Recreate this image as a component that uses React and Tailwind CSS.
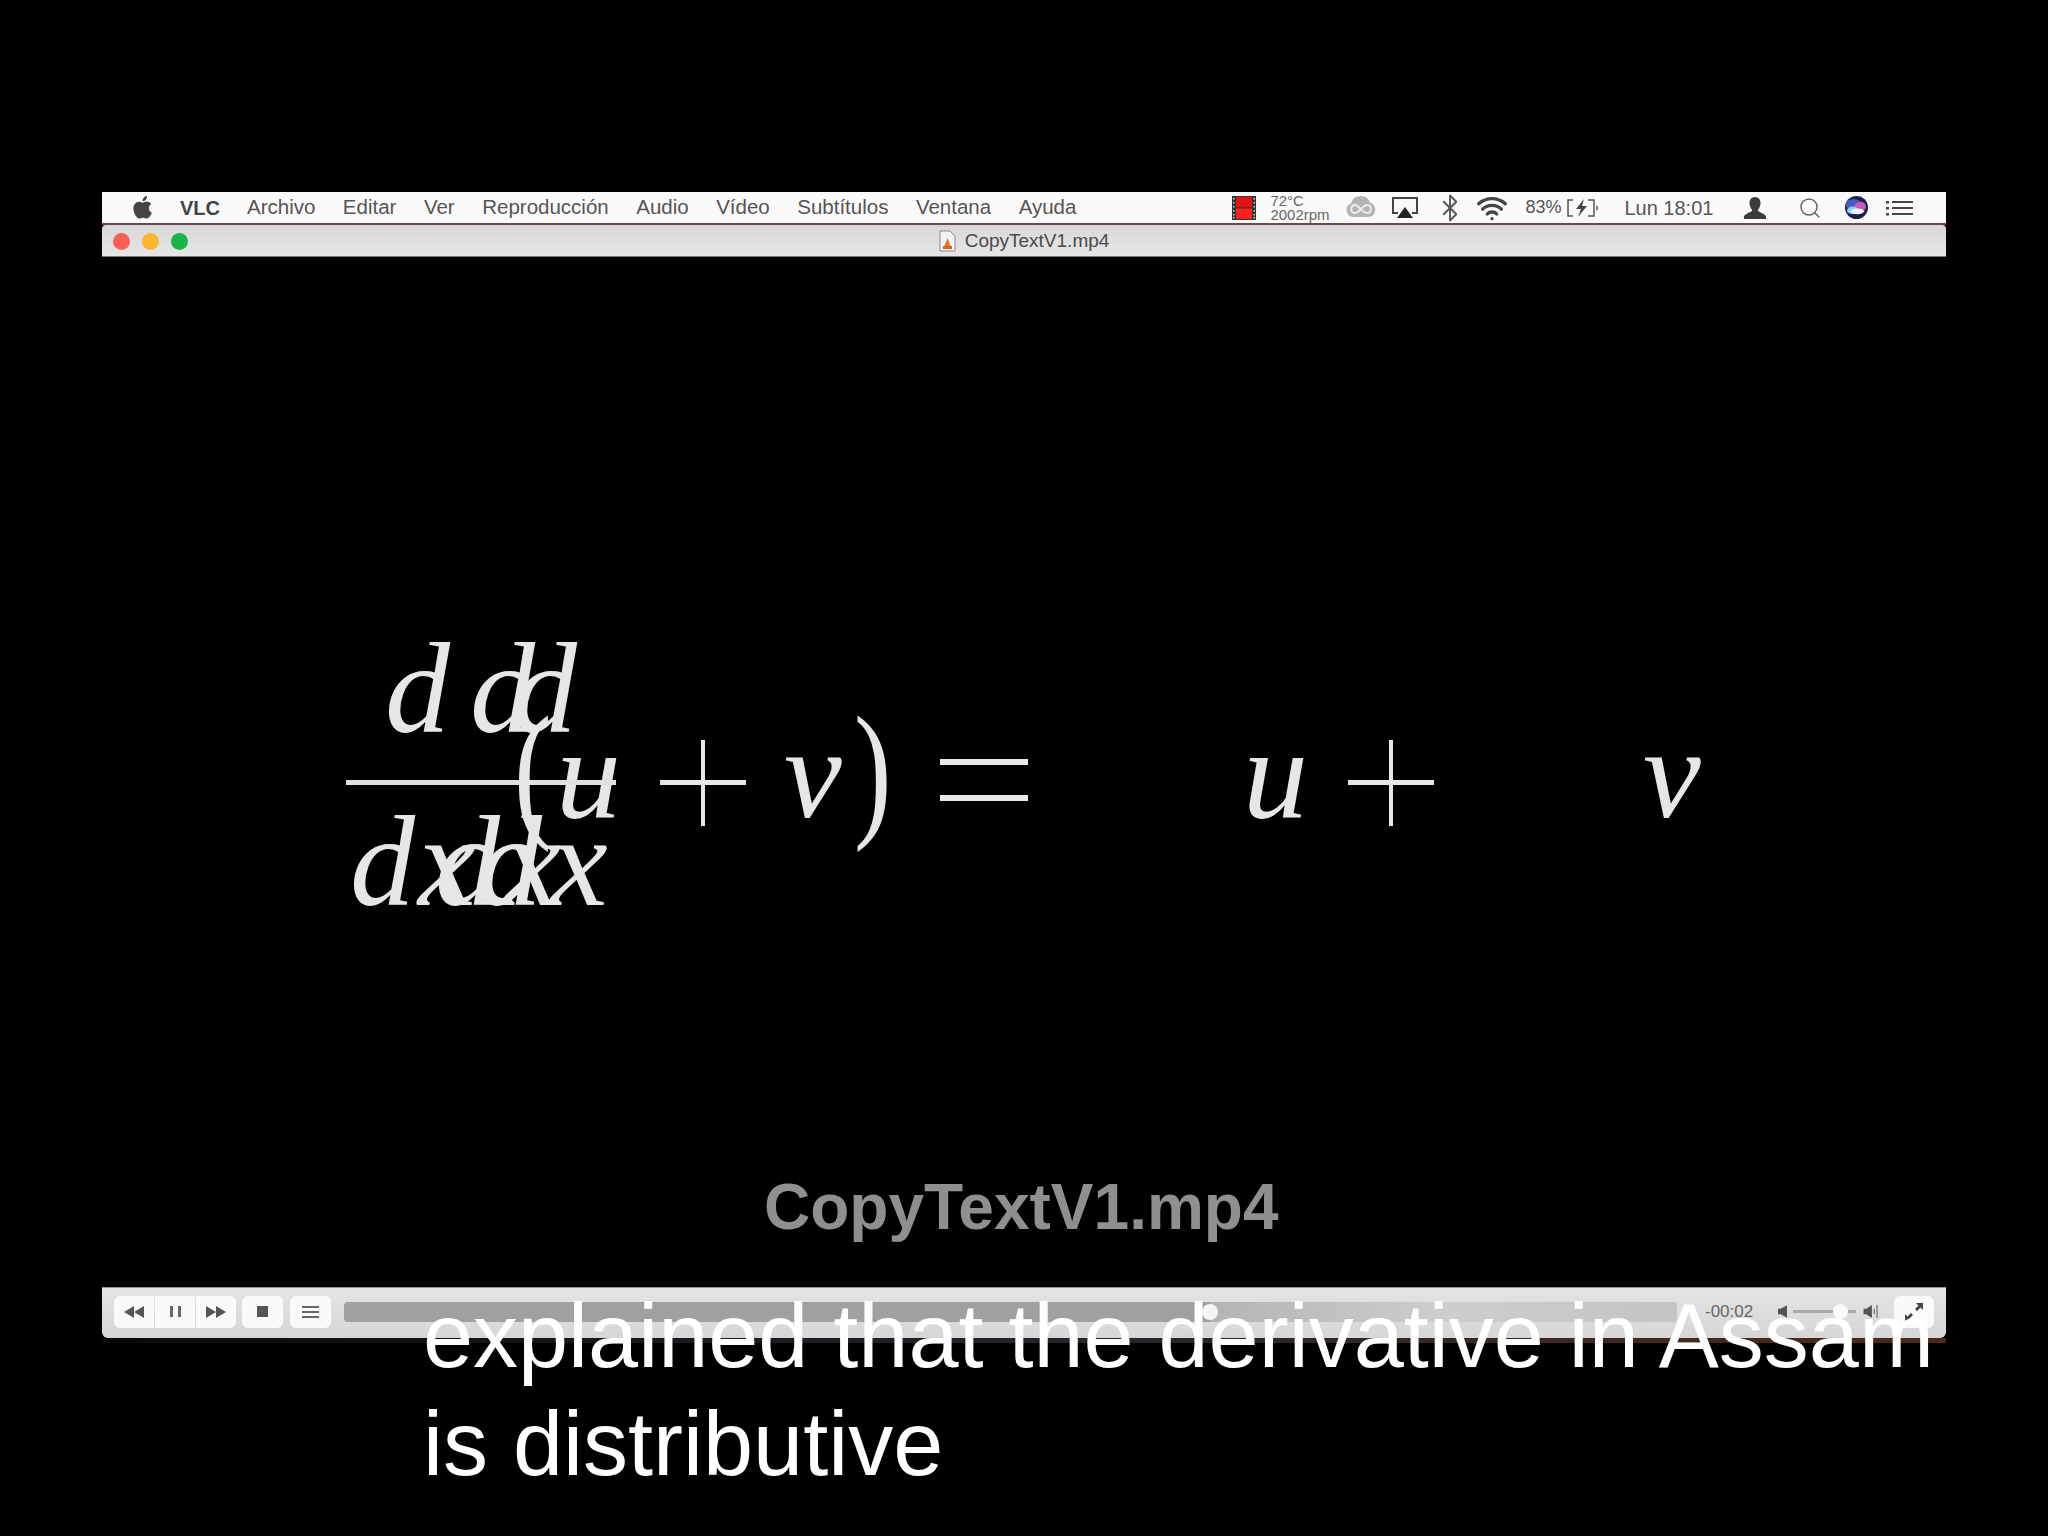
import React from 'react'
import { Search, Bluetooth, Wifi } from 'lucide-react'

const menus = ['Archivo', 'Editar', 'Ver', 'Reproducción', 'Audio', 'Vídeo', 'Subtítulos', 'Ventana', 'Ayuda']

// every glyph of the equation sits on a free canvas, overlaps are part of the picture
const glyphs = [
  ['d', 385, 730], ['d', 470, 730], ['d', 512, 730],
  ['d', 350, 903], ['x', 418, 903], ['d', 435, 903], ['x', 503, 903], ['d', 477, 903], ['x', 550, 903],
  ['u', 556, 815], ['v', 784, 815], ['u', 1243, 815], ['v', 1643, 815],
]

const Plus = ({ x }) => (
  <div className="absolute top-[740px] w-[86px] h-[86px]" style={{ left: x }}>
    <div className="absolute left-0 right-0 top-[40px] h-[5px] bg-[#e8e8e8]" />
    <div className="absolute top-0 bottom-0 left-[41px] w-[4px] bg-[#e8e8e8]" />
  </div>
)

const Equation = () => (
  <>
    {glyphs.map(([g, x, y], i) => (
      <span
        key={i}
        className="absolute font-['Liberation_Serif',serif] italic text-[130px] leading-[130px] text-[#e6e6e6]"
        style={{ left: x, top: y - 107 }}
      >
        {g}
      </span>
    ))}
    <div className="absolute left-[346px] top-[780px] w-[270px] h-[5px] bg-[#e0e0e0]" />
    <Plus x={660} />
    <Plus x={1348} />
    <div className="absolute left-[940px] top-[759px] w-[88px] h-[6px] bg-[#e8e8e8]" />
    <div className="absolute left-[940px] top-[795px] w-[88px] h-[6px] bg-[#e8e8e8]" />
    <span className="absolute left-[514px] top-[694px] font-['Liberation_Serif',serif] text-[150px] leading-[150px] text-[#e6e6e6] origin-left scale-x-75">(</span>
    <span className="absolute left-[854px] top-[694px] font-['Liberation_Serif',serif] text-[150px] leading-[150px] text-[#e6e6e6] origin-left scale-x-75">)</span>
  </>
)

const Apple = () => (
  <svg viewBox="0 0 24 24" className="w-[27px] h-[27px]" fill="#444">
    <path d="M17.6 12.7c0-2.6 2.1-3.8 2.2-3.9-1.2-1.8-3.1-2-3.7-2-1.6-.2-3.1.9-3.9.9s-2-.9-3.3-.9c-1.7 0-3.3 1-4.1 2.5-1.8 3-.5 7.600 1.200 10 .9 1.200 1.900 2.600 3.200 2.500 1.300-.1 1.800-.8 3.300-.8s2 .8 3.300.8c1.400 0 2.300-1.200 3.100-2.400 1-1.400 1.400-2.700 1.400-2.800-.1 0-2.700-1-2.700-3.900zM15 5c.7-.9 1.200-2 1-3.200-1 0-2.200.7-2.900 1.500-.6.7-1.200 1.900-1 3 1.100.1 2.200-.5 2.900-1.300z" />
  </svg>
)

const FilmStrip = () => (
  <svg viewBox="0 0 24 24" className="w-[24px] h-[24px]">
    <rect width="24" height="24" fill="#333" />
    <rect x="4" y="1" width="16" height="10.500" fill="#e01414" />
    <rect x="4" y="12.500" width="16" height="10.500" fill="#ff2020" />
    {[2, 6, 10, 14, 18, 21].map((y) => (
      <g key={y}>
        <rect x="1" y={y} width="1.500" height="1.500" fill="#ccc" />
        <rect x="21.500" y={y} width="1.500" height="1.500" fill="#ccc" />
      </g>
    ))}
  </svg>
)

const CloudIcon = () => (
  <svg viewBox="0 0 30 24" className="w-[30px] h-[24px]" fill="none">
    <path d="M7 21a7 7 0 0 1-2-13.500 10 10 0 0 1 19-1A7.500 7.500 0 0 1 23 21z" fill="#b4b4b4" />
    <path d="M9 17c-5 0-5-8 0-8 4 0 7 8 12 8s5-8 0-8c-4 0-8 8-12 8z" stroke="#ececec" strokeWidth="2" />
  </svg>
)

const Airplay = () => (
  <svg viewBox="0 0 26 24" className="w-[26px] h-[24px]" fill="none">
    <path d="M6 17H1V2h24v15h-5" stroke="#444" strokeWidth="2" />
    <path d="M13 11l8 11H5z" fill="#222" />
  </svg>
)

const Battery = () => (
  <svg viewBox="0 0 32 20" className="w-[32px] h-[20px]" fill="none" stroke="#555" strokeWidth="1.500">
    <path d="M7 2H2v16h5M22 2h6v16h-6" />
    <path d="M18 1l-8 10h5l-3 8 9-11h-5z" fill="#444" stroke="none" />
    <path d="M31 8v4" />
  </svg>
)

const User = () => (
  <svg viewBox="0 0 26 24" className="w-[24px] h-[24px]" fill="#3c3c3c">
    <path d="M13 0c4 0 6 3 6 6.500S17 13 16 14.500c0 2 7 3 9 6.500v3H1v-3c2-3.500 9-4.500 9-6.500C9 13 7 10 7 6.500S9 0 13 0z" />
  </svg>
)

const Siri = () => (
  <svg viewBox="0 0 24 24" className="w-[23px] h-[23px]">
    <circle cx="12" cy="12" r="12" fill="#1c2048" />
    <ellipse cx="9" cy="9" rx="8" ry="6" fill="#4a58c8" />
    <ellipse cx="16" cy="11" rx="6" ry="5" fill="#c85ab8" />
    <ellipse cx="8" cy="15" rx="6" ry="4" fill="#8fd0ee" />
    <ellipse cx="13" cy="16" rx="7" ry="3" fill="#eef2fa" />
  </svg>
)

const ListIcon = () => (
  <svg viewBox="0 0 27 16" className="w-[27px] h-[16px]" fill="#444">
    {[1, 7, 13].map((y) => (
      <g key={y}>
        <rect x="0" y={y} width="3" height="2.500" />
        <rect x="6" y={y} width="21" height="2" />
      </g>
    ))}
  </svg>
)

const DocIcon = () => (
  <svg viewBox="0 0 17 22" className="w-[17px] h-[22px]">
    <path d="M1 1h10l5 5v15H1z" fill="#f4f4f4" stroke="#888" />
    <path d="M8.500 8l3.500 9H5z" fill="#e8762a" />
    <rect x="4" y="16" width="9" height="3" fill="#d8661a" />
  </svg>
)

const MenuBar = () => (
  <div className="h-[33px] bg-[#fafafa] border-b-[2px] border-[#6b4a4a] flex items-center font-['Liberation_Sans',sans-serif] text-[20.5px] text-[#555]">
    <div className="ml-[27px] mr-[24px]"><Apple /></div>
    <span className="font-bold text-[20px] text-[#444] mr-[27px]">VLC</span>
    <div className="flex gap-[27.5px]">
      {menus.map((m) => <span key={m}>{m}</span>)}
    </div>
    <div className="ml-[156px]"><FilmStrip /></div>
    <div className="ml-[14px] w-[60px] text-[15px] leading-[14px] text-[#666]">
      <div>72°C</div>
      <div>2002rpm</div>
    </div>
    <div className="ml-[16px]"><CloudIcon /></div>
    <div className="ml-[16px]"><Airplay /></div>
    <Bluetooth className="ml-[17px] w-[30px] h-[30px] text-[#555]" strokeWidth={1.500} />
    <Wifi className="ml-[11px] w-[32px] h-[32px] text-[#444]" strokeWidth={2.500} />
    <span className="ml-[17px] text-[18px] w-[36px]">83%</span>
    <div className="ml-[5px]"><Battery /></div>
    <span className="ml-[26px] text-[20px]">Lun 18:01</span>
    <div className="ml-[30px]"><User /></div>
    <Search className="ml-[31px] w-[24px] h-[24px] text-[#666]" strokeWidth={1.500} />
    <div className="ml-[23px]"><Siri /></div>
    <div className="ml-[18px]"><ListIcon /></div>
  </div>
)

const TitleBar = () => (
  <div className="relative h-[32px] pt-[1px] rounded-t-[4px] bg-gradient-to-b from-[#d8d8d8] to-[#e6e6e6] border-b border-[#777] flex items-center justify-center font-['Liberation_Sans',sans-serif] text-[19px] text-[#4a4a4a]">
    <div className="absolute left-[11px] flex gap-[12px]">
      <div className="w-[17px] h-[17px] rounded-full bg-[#fb5f57]" />
      <div className="w-[17px] h-[17px] rounded-full bg-[#fdb62f]" />
      <div className="w-[17px] h-[17px] rounded-full bg-[#1cb44a]" />
    </div>
    <div className="flex items-center gap-[9px]">
      <DocIcon />
      <span>CopyTextV1.mp4</span>
    </div>
  </div>
)

const Btn = ({ className, children }) => (
  <div className={`h-[32px] bg-[#fafafa] flex items-center justify-center ${className}`}>{children}</div>
)

const Tri = ({ flip }) => (
  <svg viewBox="0 0 20 12" className={`w-[20px] h-[12px] ${flip ? 'rotate-180' : ''}`} fill="#555">
    <path d="M0 0l10 6-10 6zM10 0l10 6-10 6z" />
  </svg>
)

const ControlBar = () => (
  <div className="h-[51px] pb-[3px] rounded-b-[6px] bg-gradient-to-b from-[#e4e4e4] to-[#d6d6d6] border-t border-[#999] flex items-center pl-[12px] font-['Liberation_Sans',sans-serif]">
    <div className="flex gap-px">
      <Btn className="w-[40px] rounded-l-[6px]"><Tri flip /></Btn>
      <Btn className="w-[40px]">
        <div className="flex gap-[5px]">
          <div className="w-[3px] h-[11px] bg-[#666]" />
          <div className="w-[3px] h-[11px] bg-[#666]" />
        </div>
      </Btn>
      <Btn className="w-[40px] rounded-r-[6px]"><Tri /></Btn>
    </div>
    <Btn className="w-[41px] rounded-[6px] ml-[6px]"><div className="w-[11px] h-[11px] bg-[#555]" /></Btn>
    <Btn className="w-[41px] rounded-[6px] ml-[7px]">
      <div className="w-[17px] flex flex-col gap-[3px]">
        <div className="h-[2px] bg-[#666]" />
        <div className="h-[2px] bg-[#666]" />
        <div className="h-[2px] bg-[#666]" />
      </div>
    </Btn>
    <div className="relative ml-[13px] w-[1333px] h-[20px] flex">
      <div className="w-[866px] rounded-l-[4px] bg-[#a0a0a0]" />
      <div className="flex-1 rounded-r-[4px] bg-gradient-to-r from-[#b4b4b4] via-[#cdcdcd] to-[#c4c4c4]" />
      <div className="absolute left-[858px] top-[2px] w-[16px] h-[16px] rounded-full bg-[#f6f6f6]" />
    </div>
    <span className="ml-[28px] text-[17px] text-[#666]">-00:02</span>
    <svg viewBox="0 0 10 14" className="ml-[25px] w-[9px] h-[13px]" fill="#555"><path d="M0 4h3l7-4v14L3 10H0z" /></svg>
    <div className="relative ml-[6px] w-[63px] h-[3px] bg-[#aaa]">
      <div className="absolute left-[40px] top-[-6px] w-[15px] h-[15px] rounded-full bg-[#fafafa]" />
    </div>
    <svg viewBox="0 0 16 14" className="ml-[7px] w-[16px] h-[13px]" fill="#555"><path d="M0 4h3l6-4v14L3 10H0zM11 4h1v6h-1zM14 0h1v14h-1z" /></svg>
    <Btn className="w-[40px] rounded-[6px] ml-[15px] bg-[#f0f0f0]">
      <svg viewBox="0 0 20 20" className="w-[20px] h-[20px]" fill="#444">
        <path d="M12 1h7v7l-2.500-2.500L13 9l-2-2 3.500-3.500zM1 19v-7l2.500 2.500L7 11l2 2-3.500 3.500L8 19z" />
      </svg>
    </Btn>
  </div>
)

const App = () => (
  <div className="relative w-[2048px] h-[1536px] bg-black overflow-hidden pt-[192px] px-[102px]">
    <MenuBar />
    <TitleBar />
    <div className="h-[1030px]" />
    <ControlBar />
    <div className="h-[5px] bg-gradient-to-r from-[#0a0a0a] via-[#23242c] to-[#4a2a1a]" />

    <Equation />

    <div className="absolute left-[764px] top-[1169px] font-['Liberation_Sans',sans-serif] font-bold text-[64px] leading-[76px] text-[#8f8f8f]">
      CopyTextV1.mp4
    </div>

    <div className="absolute left-[423px] top-[1282px] w-[1580px] font-['Liberation_Sans',sans-serif] text-[90px] leading-[108px] text-white">
      explained that the derivative in Assam<br />is distributive
    </div>
  </div>
)

export default App
